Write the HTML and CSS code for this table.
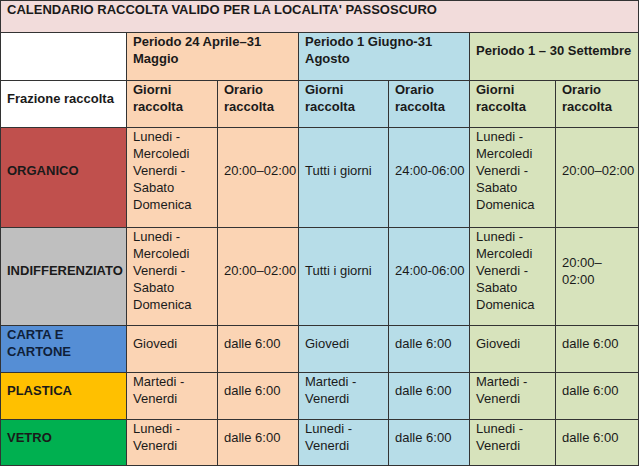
FILE: index.html
```html
<!DOCTYPE html>
<html lang="it">
<head>
<meta charset="utf-8">
<title>Calendario raccolta</title>
<link rel="stylesheet" href="styles.css">
</head>
<body>
<table class="cal">
  <colgroup>
    <col class="c1"><col class="c2"><col class="c3"><col class="c4"><col class="c5"><col class="c6"><col class="c7">
  </colgroup>
  <tr class="r-title">
    <td colspan="7" class="title b">CALENDARIO RACCOLTA VALIDO PER LA LOCALITA' PASSOSCURO</td>
  </tr>
  <tr class="r-period">
    <td class="white"></td>
    <td colspan="2" class="or b top">Periodo 24 Aprile–31 Maggio</td>
    <td colspan="2" class="bl b top">Periodo 1 Giugno-31 Agosto</td>
    <td colspan="2" class="gr b">Periodo 1 – 30 Settembre</td>
  </tr>
  <tr>
    <td class="white b">Frazione raccolta</td>
    <td class="or b top">Giorni<br>raccolta</td>
    <td class="or b top">Orario<br>raccolta</td>
    <td class="bl b top">Giorni<br>raccolta</td>
    <td class="bl b top">Orario<br>raccolta</td>
    <td class="gr b top">Giorni<br>raccolta</td>
    <td class="gr b top">Orario<br>raccolta</td>
  </tr>
  <tr class="r-org">
    <td class="organico b">ORGANICO</td>
    <td class="or">Lunedi -<br>Mercoledi<br>Venerdi -<br>Sabato<br>Domenica</td>
    <td class="or nw">20:00–02:00</td>
    <td class="bl">Tutti i giorni</td>
    <td class="bl nw">24:00-06:00</td>
    <td class="gr">Lunedi -<br>Mercoledi<br>Venerdi -<br>Sabato<br>Domenica</td>
    <td class="gr nw">20:00–02:00</td>
  </tr>
  <tr>
    <td class="indiff b nw">INDIFFERENZIATO</td>
    <td class="or">Lunedi -<br>Mercoledi<br>Venerdi -<br>Sabato<br>Domenica</td>
    <td class="or nw">20:00–02:00</td>
    <td class="bl">Tutti i giorni</td>
    <td class="bl nw">24:00-06:00</td>
    <td class="gr">Lunedi -<br>Mercoledi<br>Venerdi -<br>Sabato<br>Domenica</td>
    <td class="gr">20:00–<br>02:00</td>
  </tr>
  <tr>
    <td class="carta b">CARTA E<br>CARTONE</td>
    <td class="or">Giovedi</td>
    <td class="or nw">dalle 6:00</td>
    <td class="bl">Giovedi</td>
    <td class="bl nw">dalle 6:00</td>
    <td class="gr">Giovedi</td>
    <td class="gr nw">dalle 6:00</td>
  </tr>
  <tr>
    <td class="plastica b">PLASTICA</td>
    <td class="or">Martedi -<br>Venerdi</td>
    <td class="or nw">dalle 6:00</td>
    <td class="bl">Martedi -<br>Venerdi</td>
    <td class="bl nw">dalle 6:00</td>
    <td class="gr">Martedi -<br>Venerdi</td>
    <td class="gr nw">dalle 6:00</td>
  </tr>
  <tr class="r-last">
    <td class="vetro b">VETRO</td>
    <td class="or">Lunedi -<br>Venerdi</td>
    <td class="or nw">dalle 6:00</td>
    <td class="bl">Lunedi -<br>Venerdi</td>
    <td class="bl nw">dalle 6:00</td>
    <td class="gr">Lunedi -<br>Venerdi</td>
    <td class="gr nw">dalle 6:00</td>
  </tr>
</table>
</body>
</html>
```
FILE: styles.css
```css
html, body {
  margin: 0;
  padding: 0;
  background: #ffffff;
}

.cal {
  border-collapse: collapse;
  table-layout: fixed;
  width: 638px;
  font-family: "Liberation Sans", Arial, sans-serif;
  font-size: 13px;
  line-height: 17px;
  color: #1a1a1a;
}

.c1 { width: 126px; }
.c2 { width: 91px; }
.c3 { width: 81px; }
.c4 { width: 90px; }
.c5 { width: 81px; }
.c6 { width: 86px; }
.c7 { width: 83px; }

.cal td {
  border: 1px solid #333333;
  padding: 0 4px 12px 6px;
  vertical-align: middle;
  text-align: left;
}

.cal td.top {
  vertical-align: top;
}

.r-title td { padding-bottom: 14px; }
.r-period td { padding-bottom: 13px; }
.r-org td { padding-bottom: 14px; }
.r-last td { padding-bottom: 11px; }

.b { font-weight: bold; }
.nw { white-space: nowrap; }

.title {
  background: #f2dcdb;
}

.white { background: #ffffff; }
.or { background: #fbd4b4; }
.bl { background: #b7dde8; }
.gr { background: #d7e3bc; }

.organico { background: #c0504d; }
.indiff { background: #bfbfbf; padding-left: 5px; }
.carta { background: #558ed5; color: #0f1f3a; }
.plastica { background: #ffc000; }
.vetro { background: #00b050; }
```
